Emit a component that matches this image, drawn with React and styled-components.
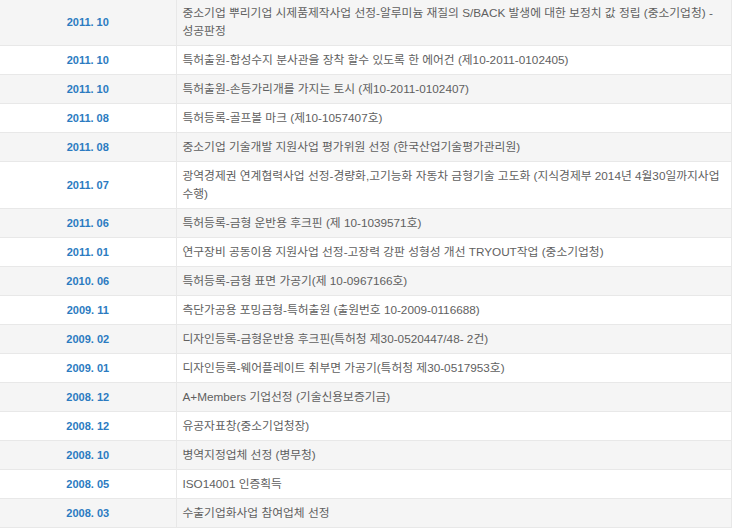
import React from "react";
import styled, { createGlobalStyle } from "styled-components";

const GlobalStyle = createGlobalStyle`
  html, body {
    margin: 0;
    padding: 0;
    background: #fff;
  }
  body {
    font-family: "Liberation Sans", Arial, "Noto Sans CJK KR", sans-serif;
    overflow: hidden;
  }
`;

const history = [
  { date: "2011. 10", text: "중소기업 뿌리기업 시제품제작사업 선정-알루미늄 재질의 S/BACK 발생에 대한 보정치 값 정립 (중소기업청) - 성공판정" },
  { date: "2011. 10", text: "특허출원-합성수지 분사관을 장착 할수 있도록 한 에어건 (제10-2011-0102405)" },
  { date: "2011. 10", text: "특허출원-손등가리개를 가지는 토시 (제10-2011-0102407)" },
  { date: "2011. 08", text: "특허등록-골프볼 마크 (제10-1057407호)" },
  { date: "2011. 08", text: "중소기업 기술개발 지원사업 평가위원 선정 (한국산업기술평가관리원)" },
  { date: "2011. 07", text: "광역경제권 연계협력사업 선정-경량화,고기능화 자동차 금형기술 고도화 (지식경제부 2014년 4월30일까지사업수행)" },
  { date: "2011. 06", text: "특허등록-금형 운반용 후크핀 (제 10-1039571호)" },
  { date: "2011. 01", text: "연구장비 공동이용 지원사업 선정-고장력 강판 성형성 개선 TRYOUT작업 (중소기업청)" },
  { date: "2010. 06", text: "특허등록-금형 표면 가공기(제 10-0967166호)" },
  { date: "2009. 11", text: "측단가공용 포밍금형-특허출원 (출원번호 10-2009-0116688)" },
  { date: "2009. 02", text: "디자인등록-금형운반용 후크핀(특허청 제30-0520447/48- 2건)" },
  { date: "2009. 01", text: "디자인등록-웨어플레이트 취부면 가공기(특허청 제30-0517953호)" },
  { date: "2008. 12", text: "A+Members 기업선정 (기술신용보증기금)" },
  { date: "2008. 12", text: "유공자표창(중소기업청장)" },
  { date: "2008. 10", text: "병역지정업체 선정 (병무청)" },
  { date: "2008. 05", text: "ISO14001 인증획득" },
  { date: "2008. 03", text: "수출기업화사업 참여업체 선정" },
];

function App() {
  return (
    <>
      <GlobalStyle />
      <Wrap>
        <HistoryTable>
          <colgroup>
            <col style={{ width: 176 }} />
            <col />
          </colgroup>
          <tbody>
            {history.map((item, i) => (
              <Row key={i} $striped={i % 2 === 0}>
                <DateCell>{item.date}</DateCell>
                <TextCell>{item.text}</TextCell>
              </Row>
            ))}
          </tbody>
        </HistoryTable>
      </Wrap>
    </>
  );
}

const Wrap = styled.div`
  width: 732px;
  margin-top: -2px;
`;

const HistoryTable = styled.table`
  width: 732px;
  border-collapse: collapse;
  table-layout: fixed;
  border-top: 1px solid #e8e8e8;
  border-right: 1px solid #e8e8e8;
`;

const Row = styled.tr`
  background: ${(p) => (p.$striped ? "#f5f5f5" : "#ffffff")};
  border-bottom: 1px solid #e8e8e8;
`;

const DateCell = styled.td`
  padding: 5px 6px;
  line-height: 18px;
  font-size: 11px;
  font-weight: bold;
  color: #2b7bc1;
  text-align: center;
  vertical-align: middle;
  border-right: 1px solid #e8e8e8;
`;

const TextCell = styled.td`
  padding: 5px 6px;
  line-height: 18px;
  font-size: 11.75px;
  color: #5f5f5f;
  text-align: left;
  vertical-align: middle;
`;

export default App;
